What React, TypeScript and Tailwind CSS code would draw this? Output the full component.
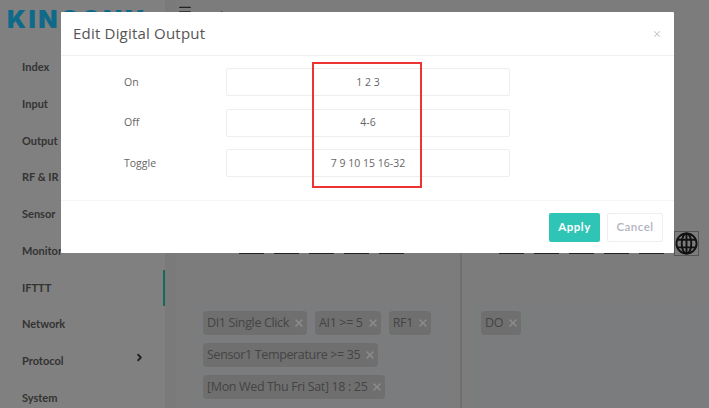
import { Menu, X, ChevronRight } from 'lucide-react'

const navItems = ['Index', 'Input', 'Output', 'RF & IR', 'Sensor', 'Monitor', 'IFTTT', 'Network', 'Protocol', 'System']

const fields = [
  { label: 'On', value: '1 2 3' },
  { label: 'Off', value: '4-6' },
  { label: 'Toggle', value: '7 9 10 15 16-32' }
]

function Tag({ text }: { text: string }) {
  return (
    <span className="flex h-6 items-center gap-[4px] rounded-sm bg-[#6f6f6f] pl-1 pr-[2px] text-[12.5px] tracking-[-0.35px] whitespace-nowrap text-[#444]">
      {text}
      <X size={12} strokeWidth={3} className="text-[#8c8c8c]" />
    </span>
  )
}

function IconRow() {
  return (
    <div className="flex gap-[10px]">
      {[0, 1, 2, 3, 4].map(i => (
        <div key={i} className="h-[23px] w-[25px] border-b border-[#222]" />
      ))}
    </div>
  )
}

export default function App() {
  return (
    <div className="relative flex h-[408px] w-[709px] overflow-hidden bg-[#7a7a7a] font-['Open_Sans','Noto_Sans',sans-serif]">
      {/* Sidebar */}
      <aside className="relative w-[165px] shrink-0 bg-[#808080]">
        <div className="h-[49px] pl-[7px] pt-[5px] font-['Inter',sans-serif] text-[25px] leading-[28px] font-black tracking-[2.5px] whitespace-nowrap text-[#0f6a8a]">
          KINCONY
        </div>
        <nav className="flex flex-col">
          {navItems.map(item => (
            <div
              key={item}
              className="relative flex h-[36.75px] items-center justify-between pr-[20px] pl-[22px] font-['Lato',sans-serif] text-[11px] font-bold text-[#333]"
            >
              {item}
              {item === 'Protocol' && <ChevronRight size={11} strokeWidth={4} className="-translate-y-[4px] text-[#222]" />}
              {item === 'IFTTT' && <div className="absolute top-0 right-0 h-[36px] w-[2px] bg-[#176a58]" />}
            </div>
          ))}
        </nav>
      </aside>

      {/* Main */}
      <main className="ml-[11px] flex-1 bg-[#7c7c7c]">
        <div className="flex h-[231px] items-start gap-3 pt-[4px] pl-[1px] text-[12px] text-[#333]">
          <Menu size={16} className="text-[#222]" />
          <span className="mt-[4px]">Index</span>
        </div>
        <div className="flex h-[177px]">
          <section className="w-[286px] border-r-2 border-[#6f6f6f]">
            <div className="flex h-[72px] pl-[63px]">
              <IconRow />
            </div>
            <div className="mr-[11px] ml-[21px] flex h-full flex-col items-start gap-2 bg-[#7a7c7d] px-[6px] pt-[8px]">
              <div className="flex gap-[8px]">
                <Tag text="DI1 Single Click" />
                <Tag text="AI1 >= 5" />
                <Tag text="RF1" />
              </div>
              <Tag text="Sensor1 Temperature >= 35" />
              <Tag text="[Mon Wed Thu Fri Sat] 18 : 25" />
            </div>
          </section>
          <section className="flex-1">
            <div className="flex h-[72px] gap-[10px] pl-[37px]">
              <IconRow />
              <div className="flex h-[25px] w-[25px] items-center justify-center border border-[#555]">
                <svg width="23" height="23" viewBox="0 0 24 24" fill="none" stroke="#111" strokeWidth="2">
                  <circle cx="12" cy="12" r="10.5" />
                  <ellipse cx="12" cy="12" rx="5" ry="10.5" />
                  <path d="M12 1.5v21M2.5 8h19M2.5 16h19" />
                </svg>
              </div>
            </div>
            <div className="ml-[11px] flex h-full bg-[#7a7c7d] px-[8px] pt-[8px]">
              <div>
                <Tag text="DO" />
              </div>
            </div>
          </section>
        </div>
      </main>

      {/* Modal */}
      <div className="absolute top-[12px] left-[61px] w-[613px] rounded-[1px] bg-white">
        <div className="flex h-[44px] items-center justify-between border-b border-[#f0f0f0] pr-[12px] pl-[12px]">
          <h2 className="text-[15px] tracking-[0.2px] text-[#555]">Edit Digital Output</h2>
          <X size={10} strokeWidth={2.5} className="text-[#c4c4c4]" />
        </div>
        <div className="flex h-[144px] flex-col gap-[12.5px] pt-[12px]">
          {fields.map(f => (
            <div key={f.label} className="flex h-[28px] items-center">
              <label className="w-[165px] pt-[1px] pl-[63px] text-[10.5px] text-[#666]">{f.label}</label>
              <div className="flex h-[28px] w-[284px] items-center justify-center rounded-[2px] border border-[#eeeeee] pt-[1px] text-[10.5px] text-[#666]">
                {f.value}
              </div>
            </div>
          ))}
        </div>
        <div className="flex h-[53px] items-center justify-end gap-[7px] border-t border-[#f5f5f5] pr-[11px]">
          <button className="h-[29px] w-[51px] rounded-[2px] bg-[#2ec4b6] font-['Lato',sans-serif] text-[11.5px] font-bold tracking-[0.5px] text-white">Apply</button>
          <button className="h-[29px] w-[56px] rounded-[2px] border border-[#eeeeee] font-['Lato',sans-serif] text-[11.5px] font-semibold tracking-[0.5px] text-[#b0b4bc]">Cancel</button>
        </div>
      </div>

      {/* Red annotation */}
      <div className="absolute top-[62px] left-[312px] h-[126px] w-[110px] border-[2px] border-[#ee3333]" />
    </div>
  )
}
